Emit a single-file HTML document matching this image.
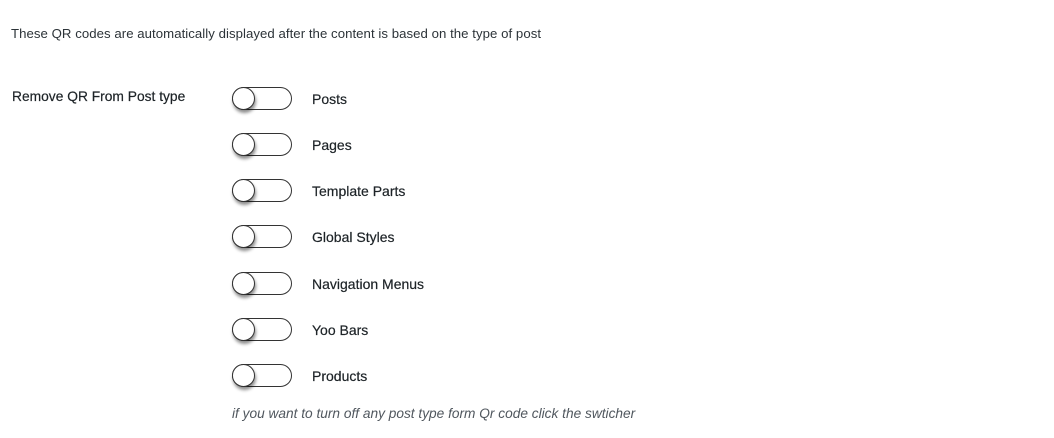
<!DOCTYPE html>
<html><head><style>
body{margin:0;background:#fff;font-family:"Liberation Sans",sans-serif;color:#2c3338;width:1054px;height:438px;overflow:hidden;position:relative}
.t{position:absolute;font-size:13px}
.sw{position:absolute;left:232px;width:58px;height:21px;border:1.5px solid #333;border-radius:12px;background:#fff}
.sw:after{content:"";position:absolute;left:-1px;top:-1px;width:21px;height:21px;border-radius:50%;border:1.5px solid #333;background:#fff;box-shadow:1px 3px 3px rgba(0,0,0,.45)}
.l{position:absolute;left:312px;font-size:14px;color:#1d2327;-webkit-text-stroke:0.2px #1d2327}
</style></head><body>
<div class="t" style="left:11px;top:26px;font-size:13.2px;letter-spacing:0.05px">These QR codes are automatically displayed after the content is based on the type of post</div>
<div class="t" style="left:12px;top:89px;font-size:13.8px;color:#1d2327;-webkit-text-stroke:0.2px #1d2327">Remove QR From Post type</div>
<div class="sw" style="top:87px"></div><div class="l" style="top:91px">Posts</div>
<div class="sw" style="top:133px"></div><div class="l" style="top:137px">Pages</div>
<div class="sw" style="top:179px"></div><div class="l" style="top:183px">Template Parts</div>
<div class="sw" style="top:225px"></div><div class="l" style="top:229px">Global Styles</div>
<div class="sw" style="top:272px"></div><div class="l" style="top:276px">Navigation Menus</div>
<div class="sw" style="top:318px"></div><div class="l" style="top:322px">Yoo Bars</div>
<div class="sw" style="top:364px"></div><div class="l" style="top:368px">Products</div>
<div class="t" style="left:232px;top:406px;font-style:italic;font-size:13.7px;color:#50575e">if you want to turn off any post type form Qr code click the swticher</div>
</body></html>
